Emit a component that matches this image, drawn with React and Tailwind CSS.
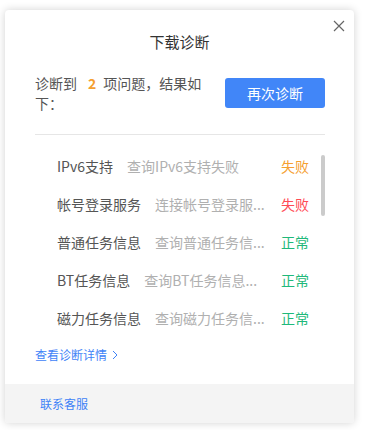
import React from 'react';

const items = [
  { name: 'IPv6支持', desc: '查询IPv6支持失败', status: '失败', color: 'text-[#f5a030]' },
  { name: '帐号登录服务', desc: '连接帐号登录服...', status: '失败', color: 'text-[#ff4b55]' },
  { name: '普通任务信息', desc: '查询普通任务信...', status: '正常', color: 'text-[#1fb97a]' },
  { name: 'BT任务信息', desc: '查询BT任务信息...', status: '正常', color: 'text-[#1fb97a]' },
  { name: '磁力任务信息', desc: '查询磁力任务信...', status: '正常', color: 'text-[#1fb97a]' },
];

const App = () => {
  return (
    <div
      className="w-[387px] h-[430px] bg-white pt-[10px] pl-[5px]"
      style={{ fontFamily: '"Microsoft YaHei", "Noto Sans CJK SC", sans-serif' }}
    >
      <div className="relative w-[349px] h-[413px] bg-white rounded-[4px] shadow-[0_0_8px_rgba(0,0,0,0.18)] flex flex-col overflow-hidden">
        {/* close */}
        <button className="absolute right-[9px] top-[10px] w-[12px] h-[12px]">
          <svg viewBox="0 0 12 12" className="w-[12px] h-[12px]">
            <path d="M1 1 L11 11 M11 1 L1 11" stroke="#666" strokeWidth="1.2" fill="none" />
          </svg>
        </button>

        <div className="pt-[21px] text-center text-[15px] leading-[22px] text-[#333]">下载诊断</div>

        <div className="mt-[20px] flex justify-between items-start pl-[30px] pr-[29px]">
          <div className="w-[172px] text-[14px] leading-[20px] text-[#555]">
            <div className="flex whitespace-nowrap">
              <span>诊断到</span>
              <span className="ml-[11px] mr-[7px] font-bold text-[#f5a030]">2</span>
              <span>项问题，结果如</span>
            </div>
            <div>下：</div>
          </div>
          <button className="mt-[5px] w-[100px] h-[30px] rounded-[3px] bg-[#4186f8] text-white text-[14px]">
            再次诊断
          </button>
        </div>

        <div className="mt-[21px] ml-[30px] mr-[29px] h-px bg-[#e6e6e6]" />

        {/* list */}
        <div className="relative h-[202px] pt-[12px]">
          {items.map((it) => (
            <div key={it.name} className="h-[38px] flex items-center pl-[52px] pr-[45px] text-[14px]">
              <div className="flex-1 flex items-center min-w-0">
                <span className="text-[#555] whitespace-nowrap">{it.name}</span>
                <span className="ml-[14px] whitespace-nowrap text-[#b0b0b0]">{it.desc}</span>
              </div>
              <span className={`w-[28px] whitespace-nowrap ${it.color}`}>{it.status}</span>
            </div>
          ))}
          <div className="absolute left-[316px] top-[20px] w-[4px] h-[61px] rounded-full bg-[#cbcbcb]" />
        </div>

        <div className="mt-[9px] pl-[30px] flex items-center text-[12px] leading-[18px] text-[#3f83f7]">
          <span>查看诊断详情</span>
          <svg viewBox="0 0 6 10" className="ml-[5px] w-[6px] h-[10px]">
            <path d="M1 1 L5 5 L1 9" stroke="#3f83f7" strokeWidth="1" fill="none" />
          </svg>
        </div>

        <div className="mt-auto h-[39px] bg-[#f4f4f4] flex items-center pl-[35px] text-[12px] text-[#3f83f7]">
          联系客服
        </div>
      </div>
    </div>
  );
};

export default App;
